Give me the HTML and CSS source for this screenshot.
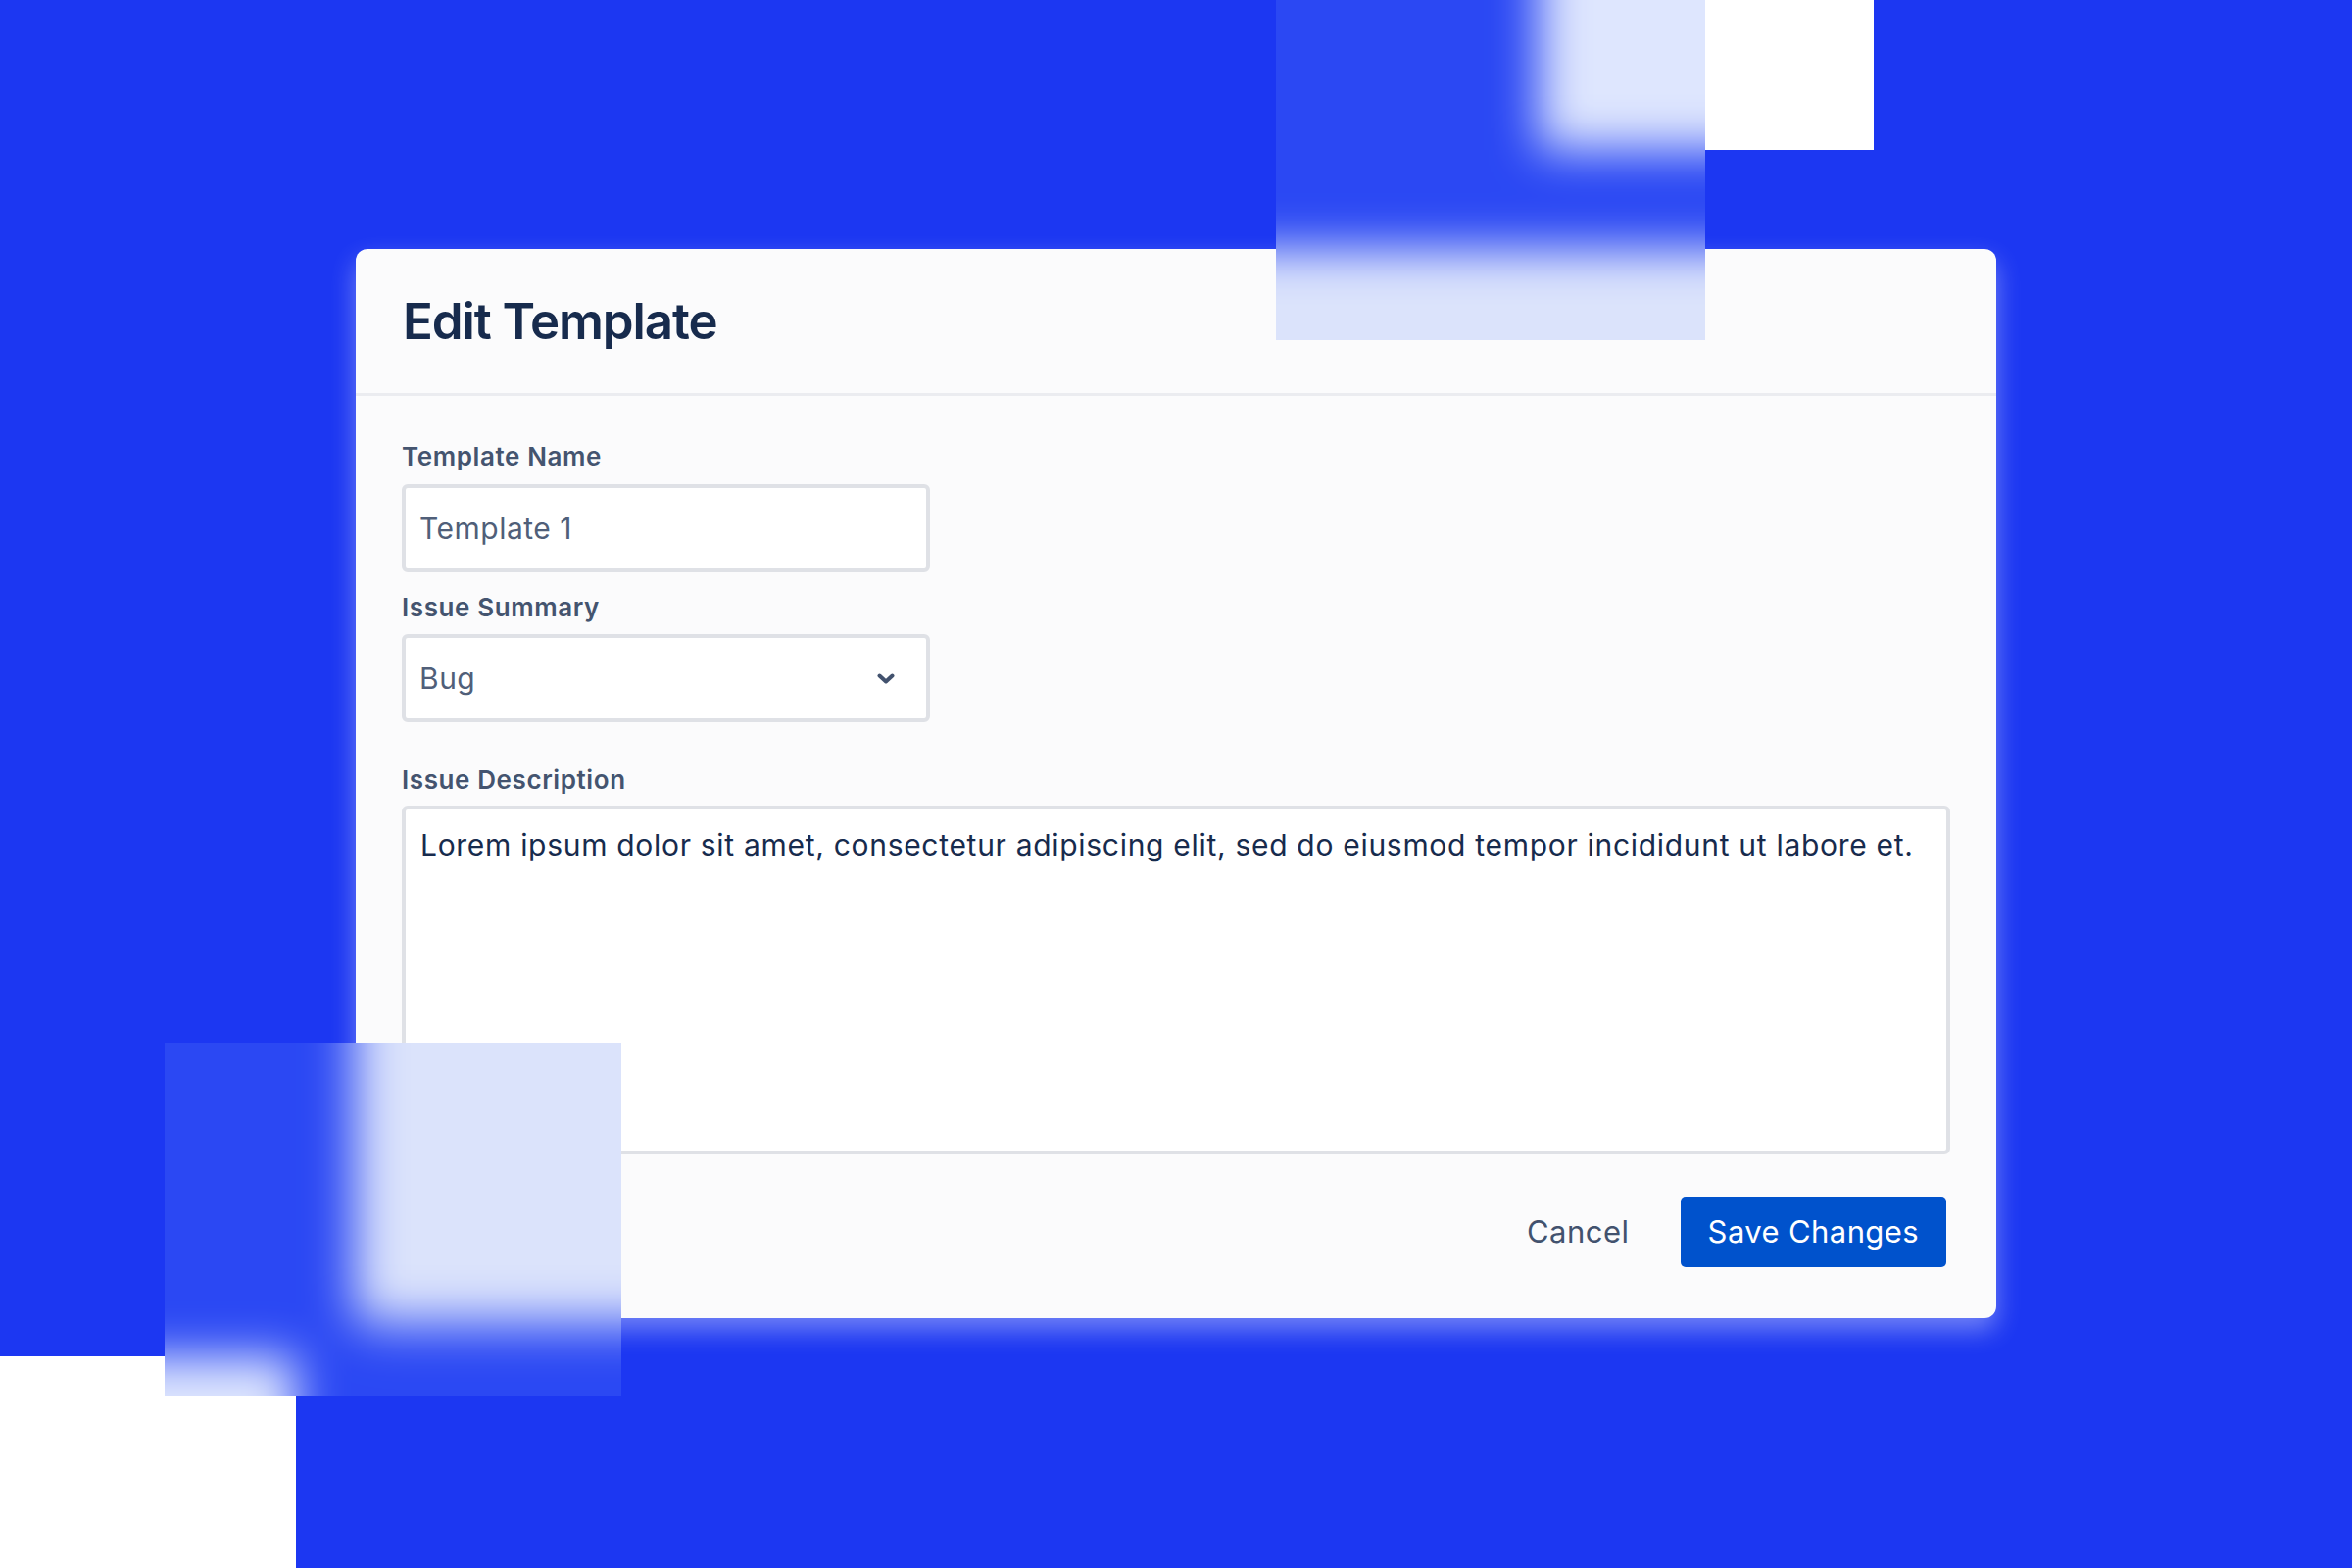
FILE: index.html
```html
<!DOCTYPE html>
<html lang="en">
<head>
<meta charset="utf-8">
<title>Edit Template</title>
<link rel="stylesheet" href="styles.css">
</head>
<body>
<div class="scene">
  <div class="blank blank-top"></div>
  <div class="blank blank-bottom"></div>

  <div class="card">
    <div class="card-header">
      <h1 class="title">Edit Template</h1>
    </div>
    <div class="card-body">
      <div class="field">
        <div class="label">Template Name</div>
        <div class="control">Template 1</div>
      </div>
      <div class="field field-select">
        <div class="label">Issue Summary</div>
        <div class="control control-select">
          <span>Bug</span>
          <svg class="chevron" width="18" height="11" viewBox="0 0 18 11" aria-hidden="true">
            <polyline points="2.5,2.5 9,8.5 15.5,2.5" fill="none" stroke="#42526e" stroke-width="4" stroke-linecap="round" stroke-linejoin="round"/>
          </svg>
        </div>
      </div>
      <div class="field field-area">
        <div class="label">Issue Description</div>
        <div class="control control-area">Lorem ipsum dolor sit amet, consectetur adipiscing elit, sed do eiusmod tempor incididunt ut labore et.</div>
      </div>
    </div>
    <div class="card-footer">
      <span class="btn-cancel">Cancel</span>
      <span class="btn-save">Save Changes</span>
    </div>
  </div>

  <!-- frosted glass squares: each holds a blurred copy of the canvas behind it -->
  <div class="glass glass-top">
    <div class="glass-backdrop">
      <div class="bd-white bd-white-top"></div>
      <div class="bd-white bd-white-bottom"></div>
      <div class="bd-card"></div>
    </div>
  </div>
  <div class="glass glass-bottom">
    <div class="glass-backdrop">
      <div class="bd-white bd-white-top"></div>
      <div class="bd-white bd-white-bottom"></div>
      <div class="bd-card"></div>
    </div>
  </div>
</div>
</body>
</html>
```

FILE: styles.css
```css
html, body {
  margin: 0;
  padding: 0;
}

body {
  width: 2400px;
  height: 1600px;
  overflow: hidden;
  font-family: "Inter", "Noto Sans", "Liberation Sans", sans-serif;
}

.scene {
  position: relative;
  width: 2400px;
  height: 1600px;
  box-sizing: border-box;
  padding-top: 254px;
  background: #1c37f2;
  overflow: hidden;
}

/* white canvas blocks behind everything */
.blank {
  position: absolute;
  background: #ffffff;
}

.blank-top {
  left: 1570px;
  top: 0;
  width: 342px;
  height: 153px;
}

.blank-bottom {
  left: 0;
  top: 1384px;
  width: 302px;
  height: 216px;
}

/* dialog card */
.card {
  position: relative;
  z-index: 1;
  width: 1674px;
  margin-left: 363px;
  background: #fbfbfc;
  border-radius: 12px;
  box-shadow: 0 12px 26px rgba(255, 255, 255, 0.38);
}

.card-header {
  height: 150px;
  box-sizing: border-box;
  padding: 0 47px 0 48px;
  display: flex;
  align-items: center;
  border-bottom: 3px solid #ebecf0;
}

.title {
  margin: 0;
  font-size: 51px;
  line-height: 61px;
  font-weight: 600;
  color: #172b4d;
  letter-spacing: -1.1px;
}

.card-body {
  padding: 45px 47px 0 47px;
}

.field {
  display: flex;
  flex-direction: column;
  gap: 12px;
  margin-bottom: 19px;
}

.field-select {
  gap: 11px;
  margin-bottom: 42px;
}

.field-area {
  gap: 10px;
  margin-bottom: 0;
}

.label {
  font-size: 26px;
  line-height: 33px;
  font-weight: 600;
  color: #44546f;
  letter-spacing: 0.6px;
}

.control {
  box-sizing: border-box;
  width: 539px;
  height: 90px;
  padding: 0 14px;
  display: flex;
  align-items: center;
  background: #ffffff;
  border: 4px solid #dfe1e6;
  border-radius: 6px;
  font-size: 30px;
  line-height: 36px;
  color: #505f79;
  letter-spacing: 0.5px;
}

.control-select {
  justify-content: space-between;
  padding-right: 32px;
}

.chevron {
  display: block;
}

.control-area {
  width: 100%;
  height: 356px;
  align-items: flex-start;
  padding: 18px 15px;
  color: #172b4d;
  white-space: nowrap;
  letter-spacing: 0.7px;
}

.card-footer {
  display: flex;
  justify-content: flex-end;
  align-items: center;
  padding: 43px 51px 52px 47px;
}

.btn-cancel {
  font-size: 31px;
  line-height: 36px;
  color: #42526e;
  letter-spacing: 0.5px;
  margin-right: 52px;
}

.btn-save {
  height: 72px;
  box-sizing: border-box;
  padding: 0 28px;
  display: flex;
  align-items: center;
  background: #0052cc;
  color: #ffffff;
  font-size: 31px;
  line-height: 36px;
  letter-spacing: 0.4px;
  border-radius: 5px;
}

/* frosted glass squares laid over the scene */
.glass {
  position: absolute;
  z-index: 2;
  overflow: hidden;
}

.glass::after {
  content: "";
  position: absolute;
  inset: 0;
  background: rgba(99, 136, 251, 0.21);
}

.glass-top {
  left: 1302px;
  top: 0;
  width: 438px;
  height: 347px;
}

.glass-bottom {
  left: 168px;
  top: 1064px;
  width: 466px;
  height: 360px;
}

/* blurred copy of the page canvas, placed in page coordinates */
.glass-backdrop {
  position: absolute;
  width: 2400px;
  height: 1600px;
  background: #1c37f2;
  box-shadow: 0 0 0 400px #1c37f2;
  filter: blur(24px);
}

.glass-top .glass-backdrop {
  left: -1302px;
  top: 0;
}

.glass-bottom .glass-backdrop {
  left: -168px;
  top: -1064px;
}

.bd-white {
  position: absolute;
  background: #ffffff;
}

.bd-white-top {
  left: 1570px;
  top: -300px;
  width: 342px;
  height: 453px;
}

.bd-white-bottom {
  left: -300px;
  top: 1384px;
  width: 602px;
  height: 516px;
}

.bd-card {
  position: absolute;
  left: 363px;
  top: 254px;
  width: 1674px;
  height: 1092px;
  background: #fbfbfc;
  border-radius: 12px;
  box-shadow: 0 12px 26px rgba(255, 255, 255, 0.38);
}
```
